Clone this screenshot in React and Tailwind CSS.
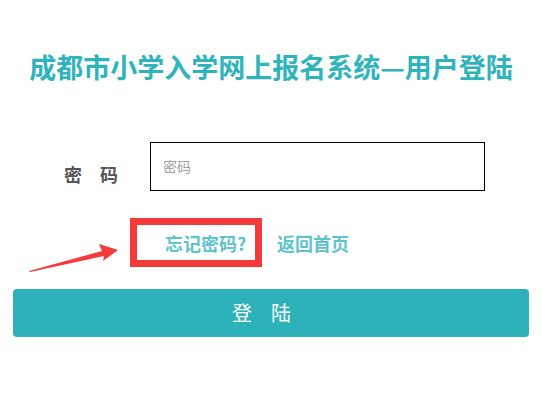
export default function App() {
  return (
    <div
      className="relative h-[405px] w-[542px] overflow-hidden bg-white"
      style={{ fontFamily: '"Noto Sans CJK SC", "Noto Sans", sans-serif' }}
    >
      <h1 className="pt-[48px] text-center text-[27px] font-bold leading-[37px] text-[#2fb4bc]">
        成都市小学入学网上报名系统—用户登陆
      </h1>

      <div className="mt-[57px] flex items-start">
        <label className="ml-[64px] mt-[20px] w-[86px] text-[18px] font-bold leading-[24px] text-[#555555]">
          密　码
        </label>
        <div className="flex h-[49px] w-[335px] items-center border border-black px-3 text-[14px] text-[#a0a0a0]">
          密码
        </div>
      </div>

      <div className="mt-[27px] flex items-center">
        <a className="ml-[130px] flex h-[49px] w-[132px] items-center border-[7px] border-[#f53a3a] pl-[28px] text-[18px] font-bold leading-[24px] text-[#5ec3ca]">
          忘记密码?
        </a>
        <a className="ml-[15px] text-[18px] font-bold leading-[24px] text-[#5ec3ca]">返回首页</a>
      </div>

      <button
        type="button"
        className="mx-[13px] mt-[22px] flex h-[48px] w-[516px] items-center justify-center rounded-[4px] bg-[#2eb2ba] text-[20px] leading-[24px] tracking-[19px] text-white"
      >
        登陆
      </button>

      <svg
        className="absolute left-[20px] top-[230px]"
        width="110"
        height="45"
        viewBox="0 0 110 45"
      >
        <polygon points="9,41 82,21 79,14 98,20 83,31 84,26 10,42" fill="#f53a3a" />
      </svg>
    </div>
  )
}
